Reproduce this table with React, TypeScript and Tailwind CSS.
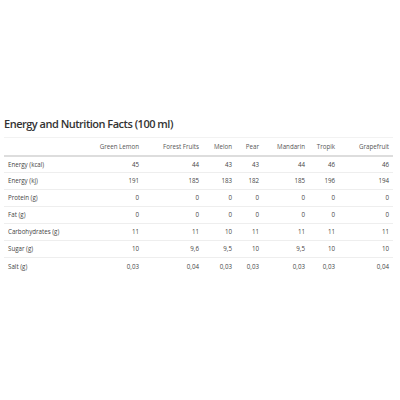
import React from 'react';

const cols = ['Green Lemon', 'Forest Fruits', 'Melon', 'Pear', 'Mandarin', 'Tropik', 'Grapefruit'];

const rows: [string, string[]][] = [
  ['Energy (kcal)', ['45', '44', '43', '43', '44', '46', '46']],
  ['Energy (kj)', ['191', '185', '183', '182', '185', '196', '194']],
  ['Protein (g)', ['0', '0', '0', '0', '0', '0', '0']],
  ['Fat (g)', ['0', '0', '0', '0', '0', '0', '0']],
  ['Carbohydrates (g)', ['11', '11', '10', '11', '11', '11', '11']],
  ['Sugar (g)', ['10', '9,6', '9,5', '10', '9,5', '10', '10']],
  ['Salt (g)', ['0,03', '0,04', '0,03', '0,03', '0,03', '0,03', '0,04']],
];

const widths = ['w-[91px]', 'w-[48px]', 'w-[60px]', 'w-[33px]', 'w-[27px]', 'w-[46px]', 'w-[30px]', 'w-[54px]'];

export default function App() {
  return (
    <div className="w-[400px] h-[400px] bg-white pt-[116px] px-[4px]" style={{ fontFamily: '"Open Sans", "Noto Sans", sans-serif' }}>
      <h2 className="text-[11px] font-semibold text-[#333] leading-[16px] tracking-[-0.5px]">Energy and Nutrition Facts (100 ml)</h2>
      <table className="mt-[5px] w-[389px] table-fixed border-collapse text-[6.2px] text-[#444]">
        <colgroup>
          {widths.map((w, i) => (
            <col key={i} className={w} />
          ))}
        </colgroup>
        <thead>
          <tr className="h-[18px] border-t border-t-[#f2f2f2] border-b-2 border-b-[#ddd]">
            <th></th>
            {cols.map((c) => (
              <th key={c} className="text-right font-normal pr-[4px] whitespace-nowrap text-[#555]">{c}</th>
            ))}
          </tr>
        </thead>
        <tbody>
          {rows.map(([label, vals]) => (
            <tr key={label} className="h-[17px] border-b border-b-[#eee] last:border-b-0">
              <td className="pl-[4px] whitespace-nowrap">{label}</td>
              {vals.map((v, i) => (
                <td key={i} className="text-right pr-[4px]">{v}</td>
              ))}
            </tr>
          ))}
        </tbody>
      </table>
    </div>
  );
}
